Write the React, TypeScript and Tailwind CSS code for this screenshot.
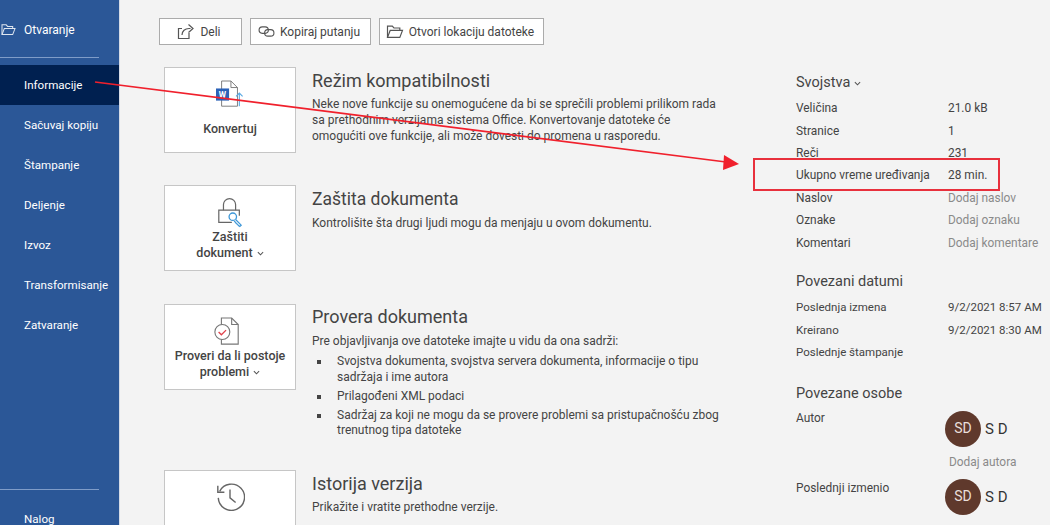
import { ReactNode } from "react";

const navItems = ["Sačuvaj kopiju", "Štampanje", "Deljenje", "Izvoz", "Transformisanje", "Zatvaranje"];

function FolderIcon({ className }: { className?: string }) {
  return (
    <svg viewBox="0 0 16 14" className={className} fill="none" stroke="currentColor" strokeWidth="1.1">
      <path d="M1 12.5V2h4.5l1.5 1.7h5.5V6" />
      <path d="M1 12.5 3.5 6H15l-2.5 6.5z" />
    </svg>
  );
}

function ActionButton({ icon, label, width }: { icon: ReactNode; label: string; width: string }) {
  return (
    <button className={`${width} flex h-[27px] items-center justify-center gap-[5px] border border-[#ababab] bg-white pr-[3px] text-[12px] text-[#444]`}>
      {icon}
      {label}
    </button>
  );
}

function Card({ icon, children }: { icon: ReactNode; children: ReactNode }) {
  return (
    <div className="flex h-[86px] w-[132px] shrink-0 flex-col items-center border border-[#c6c6c6] bg-white pt-[9px] text-center text-[12.5px] leading-[16px] font-medium text-[#444]">
      <div className="flex h-[36px] items-center justify-center">{icon}</div>
      {children}
    </div>
  );
}

function Chevron() {
  return (
    <svg viewBox="0 0 8 5" className="ml-[4px] inline h-[5px] w-[7px] align-middle" fill="none" stroke="#555" strokeWidth="1.2">
      <path d="M1 1l3 3 3-3" />
    </svg>
  );
}

function Row({ label, value, muted, small }: { label: string; value?: string; muted?: boolean; small?: boolean }) {
  return (
    <div className={`flex h-[22.4px] items-center text-[#444] ${small ? "text-[11.5px]" : "text-[11.9px]"}`}>
      <span className="w-[152px] shrink-0">{label}</span>
      <span className={`whitespace-nowrap ${muted ? "text-[#8a8a8a]" : ""}`}>{value}</span>
    </div>
  );
}

function Person() {
  return (
    <div className="flex items-center gap-[4px]">
      <div className="flex h-[36px] w-[36px] items-center justify-center rounded-full bg-[#5f392c] text-[14px] text-[#eadfda]">SD</div>
      <span className="text-[15px] whitespace-nowrap text-[#333]">S D</span>
    </div>
  );
}

export default function App() {
  return (
    <div className="relative flex h-[525px] w-[1050px] overflow-hidden bg-[#f3f3f3] font-['Roboto',sans-serif]">
      <aside className="flex w-[120px] shrink-0 flex-col border-r border-[#d5dbe6] bg-[#2b5797] text-[11.6px] text-white">
        <div className="flex h-[57px] items-start pt-[21px]">
          <FolderIcon className="mt-[2px] ml-[1px] h-[13px] w-[15px] text-[#dfe6f0]" />
          <span className="ml-[8px] text-[12px]">Otvaranje</span>
        </div>
        <div className="mr-[20px] h-px bg-[#7f9cc8]" />
        <div className="mt-[7px] flex h-[40px] items-center bg-[#002050] pt-[1px] pl-[24px]">Informacije</div>
        {navItems.map((item) => (
          <div key={item} className="flex h-[40px] items-center pt-[1px] pl-[24px] whitespace-nowrap">{item}</div>
        ))}
        <div className="mt-auto mr-[20px] h-px bg-[#7f9cc8]" />
        <div className="h-[35px] pt-[20px] pl-[24px] leading-[18px]">Nalog</div>
      </aside>

      <main className="flex min-w-0 flex-1 pt-[18px]">
        <div className="w-[633px] shrink-0 pl-[39px]">
          <div className="flex gap-[8px]">
            <ActionButton
              width="w-[83px]"
              label="Deli"
              icon={
                <svg viewBox="0 0 18 17" className="h-[17px] w-[18px]" fill="none" stroke="#555" strokeWidth="1.2">
                  <path d="M5 5.5H1.5v10H12V10" />
                  <path d="M5 12c0-4 3-6.5 7-6.5h1.5" />
                  <path d="M11.5 1.5l4.5 4-4.5 4" />
                </svg>
              }
            />
            <ActionButton
              width="w-[121px]"
              label="Kopiraj putanju"
              icon={
                <svg viewBox="0 0 18 14" className="h-[13px] w-[17px]" fill="none" stroke="#555" strokeWidth="1.2">
                  <rect x="1" y="2" width="10" height="7" rx="3.5" />
                  <rect x="7" y="5" width="10" height="7" rx="3.5" />
                </svg>
              }
            />
            <ActionButton
              width="w-[165px]"
              label="Otvori lokaciju datoteke"
              icon={<FolderIcon className="h-[15px] w-[18px] text-[#555]" />}
            />
          </div>

          <section className="mt-[22px] ml-[5px] flex gap-[16px]">
            <Card
              icon={
                <svg viewBox="0 0 30 32" className="h-[30px] w-[28px]">
                  <path d="M6 1h10l7 7v20H6z" fill="#fff" stroke="#777" />
                  <path d="M16 1v7h7" fill="none" stroke="#777" />
                  <rect x="0" y="9" width="14" height="13" fill="#2b62b8" />
                  <text x="7" y="19.5" textAnchor="middle" fontSize="9" fontWeight="700" fill="#fff">W</text>
                  <path d="M25 28V14M21.5 17.5 25 14l3.5 3.5" fill="none" stroke="#59a9e3" strokeWidth="1.2" />
                </svg>
              }
            >
              <div className="mt-[8px]">Konvertuj</div>
            </Card>
            <div className="text-[#444]">
              <h2 className="mt-[2px] text-[18px] leading-[24px]">Režim kompatibilnosti</h2>
              <p className="mt-[3px] w-[412px] text-[12px] leading-[16px]">
                Neke nove funkcije su onemogućene da bi se sprečili problemi prilikom rada sa prethodnim verzijama sistema Office. Konvertovanje datoteke će omogućiti ove funkcije, ali može dovesti do promena u rasporedu.
              </p>
            </div>
          </section>

          <section className="mt-[32px] ml-[5px] flex gap-[16px]">
            <Card
              icon={
                <svg viewBox="0 0 30 34" className="h-[32px] w-[28px]">
                  <path d="M8 14V8a6.5 6.5 0 0 1 13 0v6" fill="none" stroke="#666" strokeWidth="1.3" />
                  <path d="M17 27H3V14h22v6" fill="none" stroke="#666" strokeWidth="1.3" />
                  <circle cx="18" cy="21" r="4" fill="#fff" stroke="#3d97d8" strokeWidth="1.4" />
                  <path d="M21 24l6 6-1.5 1.5-1.5-1-1-1.5-1-.5-2.5-3" fill="#fff" stroke="#3d97d8" strokeWidth="1.3" />
                </svg>
              }
            >
              <div className="-mt-[2px]">Zaštiti</div>
              <div>dokument<Chevron /></div>
            </Card>
            <div className="text-[#444]">
              <h2 className="mt-[2px] text-[17.5px] leading-[24px]">Zaštita dokumenta</h2>
              <p className="mt-[4px] text-[12px] leading-[16px]">Kontrolišite šta drugi ljudi mogu da menjaju u ovom dokumentu.</p>
            </div>
          </section>

          <section className="mt-[33px] ml-[5px] flex gap-[16px]">
            <Card
              icon={
                <svg viewBox="0 0 30 32" className="-ml-[6px] h-[30px] w-[28px]">
                  <path d="M9 1h11l7 7v21H9z" fill="#fff" stroke="#777" strokeWidth="1.2" />
                  <path d="M20 1v7h7" fill="none" stroke="#777" strokeWidth="1.2" />
                  <circle cx="10" cy="16" r="8" fill="#fff" stroke="#777" strokeWidth="1.2" />
                  <path d="M6 16l3 3 5-5" fill="none" stroke="#e0434c" strokeWidth="1.4" />
                </svg>
              }
            >
              <div className="-mt-[2px] whitespace-nowrap">Proveri da li postoje</div>
              <div>problemi<Chevron /></div>
            </Card>
            <div className="text-[#444]">
              <h2 className="mt-[1px] text-[18px] leading-[24px]">Provera dokumenta</h2>
              <p className="mt-[4px] text-[12px] leading-[16px]">Pre objavljivanja ove datoteke imajte u vidu da ona sadrži:</p>
              <ul className="mt-[5px] w-[420px] list-none text-[12px] leading-[15.5px]">
                {[
                  "Svojstva dokumenta, svojstva servera dokumenta, informacije o tipu sadržaja i ime autora",
                  "Prilagođeni XML podaci",
                  "Sadržaj za koji ne mogu da se provere problemi sa pristupačnošću zbog trenutnog tipa datoteke",
                ].map((item) => (
                  <li key={item} className="relative mb-[3.5px] pl-[25px]">
                    <span className="absolute top-[6px] left-[5px] h-[4px] w-[4px] bg-[#444]" />
                    {item}
                  </li>
                ))}
              </ul>
            </div>
          </section>

          <section className="mt-[28px] ml-[5px] flex gap-[16px]">
            <Card
              icon={
                <svg viewBox="0 0 32 32" className="-mt-[4px] h-[30px] w-[30px]" fill="none" stroke="#666" strokeWidth="1.5">
                  <path d="M5 11a14 14 0 1 1-1.5 7" />
                  <path d="M3 5v7h7" />
                  <path d="M16 9v9l6 5" />
                </svg>
              }
            >
              <span />
            </Card>
            <div className="text-[#444]">
              <h2 className="mt-[2px] text-[18px] leading-[24px]">Istorija verzija</h2>
              <p className="mt-[3px] text-[12px] leading-[16px]">Prikažite i vratite prethodne verzije.</p>
            </div>
          </section>
        </div>

        <div className="w-[297px] shrink-0 pl-[43px] pt-[56px] text-[#444]">
          <h3 className="text-[14.5px] leading-[18px]">Svojstva<Chevron /></h3>
          <div className="mt-[6px]">
            <Row label="Veličina" value="21.0 kB" />
            <Row label="Stranice" value="1" />
            <Row label="Reči" value="231" />
            <Row label="Ukupno vreme uređivanja" value="28 min." />
            <Row label="Naslov" value="Dodaj naslov" muted />
            <Row label="Oznake" value="Dodaj oznaku" muted />
            <Row label="Komentari" value="Dodaj komentare" muted />
          </div>
          <h3 className="mt-[18px] text-[14.5px] leading-[18px]">Povezani datumi</h3>
          <div className="mt-[6px]">
            <Row small label="Poslednja izmena" value="9/2/2021 8:57 AM" />
            <Row small label="Kreirano" value="9/2/2021 8:30 AM" />
            <Row small label="Poslednje štampanje" />
          </div>
          <h3 className="mt-[21px] text-[14.5px] leading-[18px]">Povezane osobe</h3>
          <div className="mt-[7px] flex text-[11.9px]">
            <span className="w-[149px] shrink-0">Autor</span>
            <div className="mt-[1px]">
              <Person />
              <div className="mt-[7px] ml-[4px] whitespace-nowrap text-[#8a8a8a]">Dodaj autora</div>
            </div>
          </div>
          <div className="mt-[7px] flex text-[11.9px]">
            <span className="w-[149px] shrink-0 pt-[1px]">Poslednji izmenio</span>
            <div><Person /></div>
          </div>
        </div>
      </main>

      {/* red annotation over the screenshot */}
      <div className="absolute top-[158px] left-[753px] h-[33px] w-[247px] border-2 border-[#e8303c]" />
      <svg viewBox="0 0 1050 525" className="pointer-events-none absolute inset-0 h-[525px] w-[1050px]">
        <path d="M95 82 726 162" stroke="#f0202c" strokeWidth="1.7" />
        <path d="M739 164 724 155 723 170z" fill="#f0202c" />
      </svg>
    </div>
  );
}
